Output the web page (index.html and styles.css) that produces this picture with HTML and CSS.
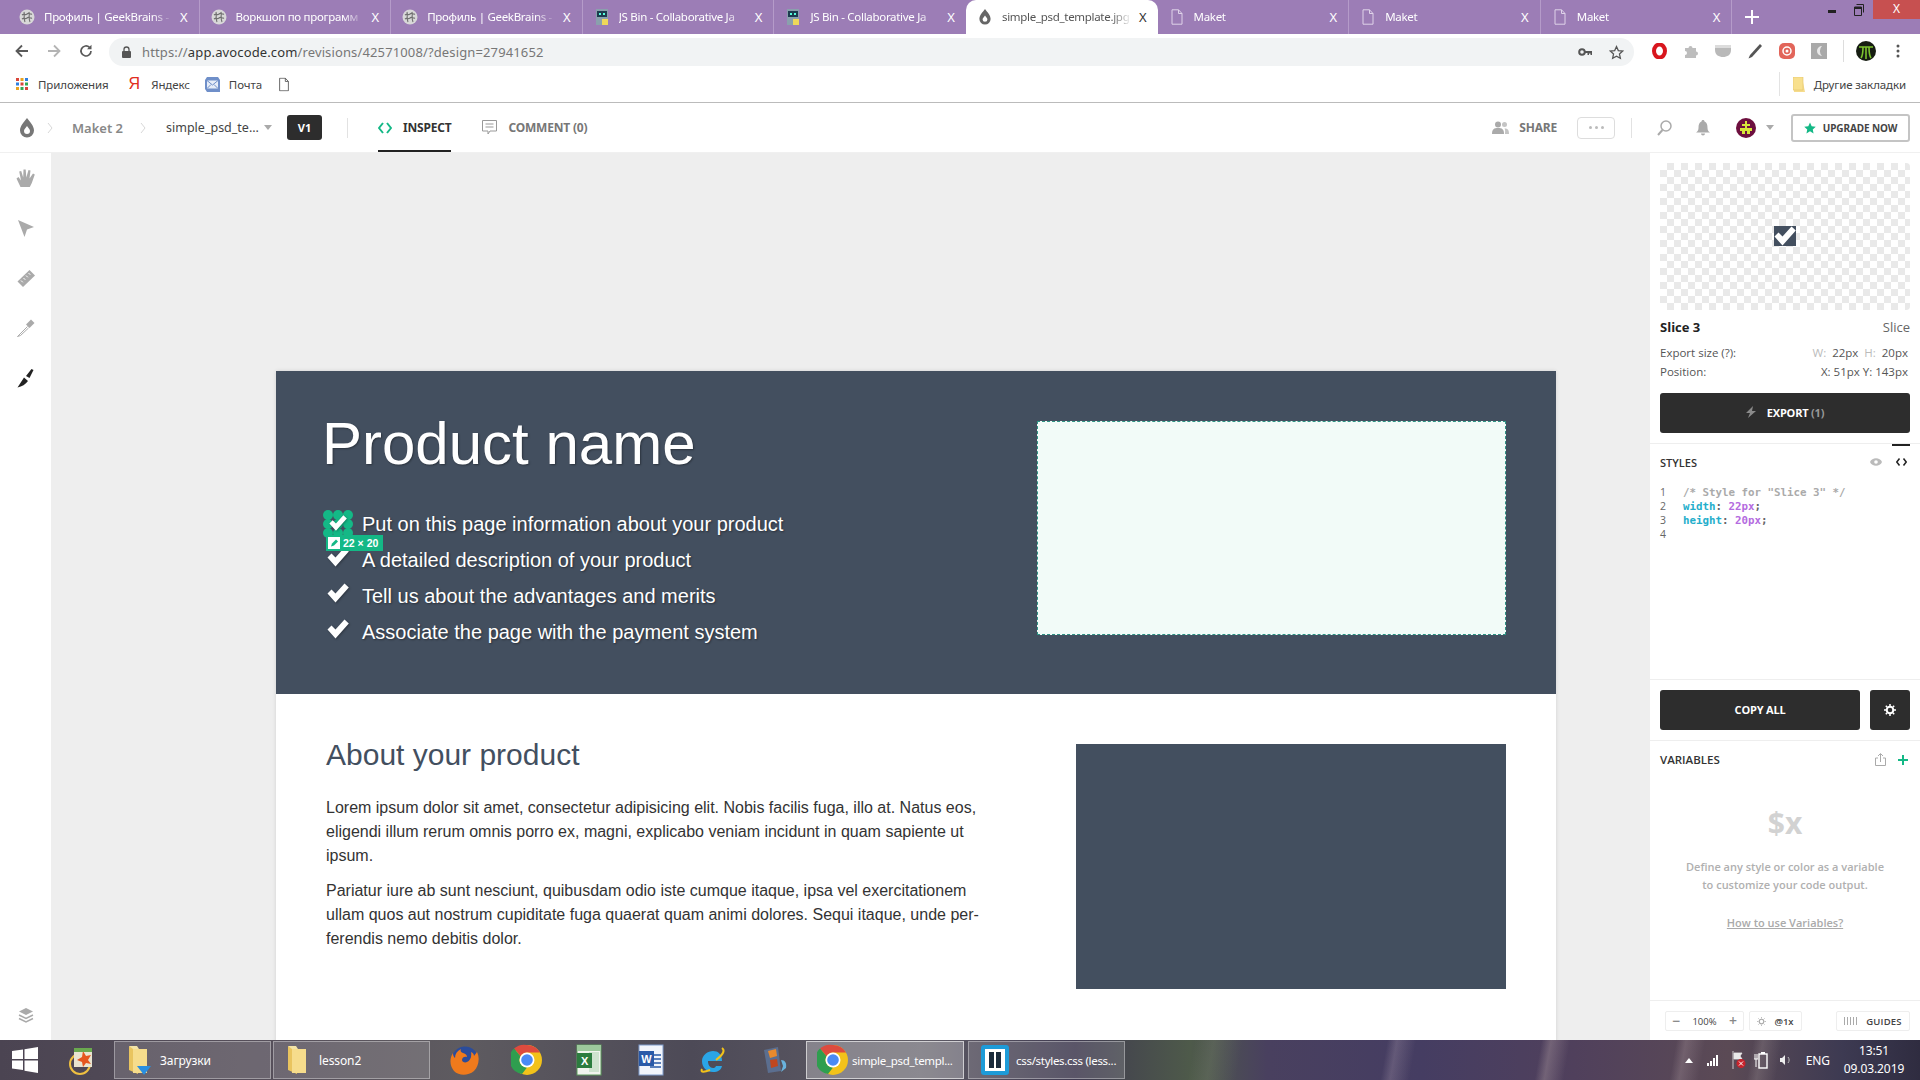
FILE: index.html
```html
<!DOCTYPE html>
<html lang="ru">
<head>
<meta charset="utf-8">
<title>simple_psd_template.jpg</title>
<link rel="stylesheet" href="styles.css">
</head>
<body>
<svg class="defs" width="0" height="0">
  <defs>
    <symbol id="brain" viewBox="0 0 16 16"><circle cx="8" cy="8" r="7.5" fill="#d8d8d8"/><path d="M3 6c2-2 3 1 5-1s3 1 5 0M3 10c2-2 3 1 5-1s3 1 5 0M5 3c1 3-1 6 1 10M10 3c1 3-1 6 1 10" fill="none" stroke="#6f6f6f" stroke-width="1.1"/></symbol>
    <symbol id="jsbin" viewBox="0 0 16 16"><rect x="2" y="0" width="12" height="16" fill="#8aa0ad"/><rect x="3" y="2" width="10" height="6" fill="#1d3b4f"/><rect x="5" y="4" width="2" height="2" fill="#5fd"/><rect x="9" y="4" width="2" height="2" fill="#5fd"/><rect x="8" y="10" width="6" height="6" fill="#efd85a"/></symbol>
    <symbol id="doc" viewBox="0 0 16 16"><path d="M3 .8h6.5L13 4.5v10.7H3zM9.500 .8v3.700H13" fill="none" stroke="currentColor" stroke-width="1"/></symbol>
    <symbol id="drop" viewBox="0 0 16 20"><path fill-rule="evenodd" d="M8 0c3 4 7 8 7 12.500a7 7 0 0 1-14 0C1 8 5 4 8 0zm0 8c-1.500 2-3 3.500-3 5a3 3 0 0 0 6 0c0-1.500-1.500-3-3-5z" fill="currentColor"/></symbol>
    <symbol id="chrome" viewBox="0 0 32 32"><circle cx="16" cy="16" r="15" fill="#f2c21a"/><path d="M16 1a15 15 0 0 1 13 7.500H16a7.500 7.500 0 0 0-6.500 3.750L3 4.500A15 15 0 0 1 16 1z" fill="#dd4b3e"/><path d="M3 4.500l6.500 7.750A7.500 7.500 0 0 0 16 23.500L11 30.100A15 15 0 0 1 3 4.500z" fill="#2f9e4f"/><circle cx="16" cy="16" r="7.500" fill="#fff"/><circle cx="16" cy="16" r="5.800" fill="#4a8af4"/></symbol>
    <symbol id="folder" viewBox="0 0 24 32"><path d="M3 2l9 4v24l-9-4z" fill="#e9c45f"/><path d="M7 5h14v24H7z" fill="#f6dc8c"/><path d="M3 2h8l2 3H7z" fill="#f4e3a6"/></symbol>
    <symbol id="check" viewBox="0 0 22 20"><path d="M.5 10.500L4.500 6.500 8.500 10.500 17.500 .5 21.800 4.500 8.500 19.500z" fill="#fff"/></symbol>
  </defs>
</svg>

<div class="tabstrip">
  <div class="tab"><svg class="fav"><use href="#brain"/></svg><span class="tab-title">Профиль | GeekBrains - </span><span class="tab-x">X</span></div>
  <div class="tab"><svg class="fav"><use href="#brain"/></svg><span class="tab-title">Воркшоп по программ</span><span class="tab-x">X</span></div>
  <div class="tab"><svg class="fav"><use href="#brain"/></svg><span class="tab-title">Профиль | GeekBrains - </span><span class="tab-x">X</span></div>
  <div class="tab"><svg class="fav"><use href="#jsbin"/></svg><span class="tab-title">JS Bin - Collaborative Ja</span><span class="tab-x">X</span></div>
  <div class="tab tab-prev"><svg class="fav"><use href="#jsbin"/></svg><span class="tab-title">JS Bin - Collaborative Ja</span><span class="tab-x">X</span></div>
  <div class="tab tab-active"><svg class="fav fav-drop"><use href="#drop"/></svg><span class="tab-title">simple_psd_template.jpg</span><span class="tab-x">X</span></div>
  <div class="tab"><svg class="fav"><use href="#doc"/></svg><span class="tab-title">Maket</span><span class="tab-x">X</span></div>
  <div class="tab"><svg class="fav"><use href="#doc"/></svg><span class="tab-title">Maket</span><span class="tab-x">X</span></div>
  <div class="tab tab-last"><svg class="fav"><use href="#doc"/></svg><span class="tab-title">Maket</span><span class="tab-x">X</span></div>
  <svg class="newtab" width="14" height="14" viewBox="0 0 14 14"><path d="M7 0v14M0 7h14" stroke="#fff" stroke-width="2"/></svg>
  <div class="winctl">
    <span class="win-min"></span>
    <svg class="win-res" width="10" height="12" viewBox="0 0 10 12"><path d="M2.500 .5h7v8M.5 3h7v8.500h-7z" fill="none" stroke="#222" stroke-width="1"/><path d="M.5 3h7v2h-7z" fill="#222"/></svg>
    <span class="win-close">X</span>
  </div>
</div>

<div class="toolbar">
  <span class="nav-btn"><svg width="14" height="14" viewBox="0 0 14 14"><path d="M13 7H2M7 1.500L1.500 7 7 12.500" fill="none" stroke="#5a5a5a" stroke-width="1.800"/></svg></span>
  <span class="nav-btn"><svg width="14" height="14" viewBox="0 0 14 14"><path d="M1 7h11M7 1.500L12.500 7 7 12.500" fill="none" stroke="#b4b4b4" stroke-width="1.800"/></svg></span>
  <span class="nav-btn"><svg width="14" height="14" viewBox="0 0 14 14"><path d="M12 7a5 5 0 1 1-1.500-3.600" fill="none" stroke="#5a5a5a" stroke-width="1.700"/><path d="M12.500 .8v4.400H8z" fill="#5a5a5a"/></svg></span>
  <div class="omnibox">
    <svg class="lock" width="9" height="12" viewBox="0 0 9 12"><path d="M2 5V3.500a2.500 2.500 0 0 1 5 0V5" fill="none" stroke="#555" stroke-width="1.300"/><rect y="5" width="9" height="7" rx="1" fill="#555"/></svg>
    <span class="url"><span class="url-d">https://</span><span class="url-h">app.avocode.com</span><span class="url-d">/revisions/42571008/?design=27941652</span></span>
    <svg class="key" width="14" height="8" viewBox="0 0 14 8"><circle cx="4" cy="4" r="2.800" fill="none" stroke="#555" stroke-width="2"/><path d="M7 3h7v4h-1.500V5.500H11V7H9.500V5H7z" fill="#555"/></svg>
    <svg class="star" width="15" height="15" viewBox="0 0 24 24"><path d="M12 2.500l2.900 6.500 7.100.7-5.300 4.700 1.500 7-6.200-3.600-6.200 3.600 1.500-7L2 9.700 9.100 9z" fill="none" stroke="#555" stroke-width="2"/></svg>
  </div>
  <div class="ext-row">
    <span class="ext"><svg width="15" height="16" viewBox="0 0 15 16"><ellipse cx="7.500" cy="8" rx="5.500" ry="6.500" fill="none" stroke="#d8161e" stroke-width="4"/></svg></span>
    <span class="ext"><svg width="14" height="14" viewBox="0 0 14 14"><path d="M1 4h3.500a2 2 0 1 1 4 0H12v3.500a2 2 0 1 1 0 4V14H1v-3a2 2 0 1 0 0-4z" fill="#bdbdbd"/></svg></span>
    <span class="ext"><svg width="16" height="12" viewBox="0 0 16 12"><path d="M0 0h16v5c0 5-4 7-8 7s-8-2-8-7z" fill="#b9b9b9"/><path d="M0 0h16v3H0z" fill="#dcdcdc"/></svg></span>
    <span class="ext"><svg width="15" height="16" viewBox="0 0 15 16"><path d="M12 1l2 2L4 14l-3.500 1.500L2 12z" fill="#555"/></svg></span>
    <span class="ext"><svg width="16" height="16" viewBox="0 0 16 16"><rect width="16" height="16" rx="5" fill="#e2655a"/><circle cx="8" cy="8" r="4" fill="none" stroke="#fff" stroke-width="1.500"/><circle cx="8" cy="8" r="1.500" fill="#fff"/></svg></span>
    <span class="ext"><svg width="16" height="16" viewBox="0 0 16 16"><rect width="16" height="16" fill="#a9a9a9"/><path d="M11 3a5 5 0 0 0 0 10 7 7 0 0 1 0-10z" fill="#e9e9e9"/></svg></span>
    <span class="ext-sep"></span>
    <span class="ext ext-avatar"><svg width="20" height="20" viewBox="0 0 20 20"><circle cx="10" cy="10" r="10" fill="#161d12"/><path d="M3 6h14M7 6c0 5 0 8-2 11M13 6c0 5 0 8 2 11M10 6v12" fill="none" stroke="#7cc42e" stroke-width="1.600"/></svg></span>
    <span class="ext"><svg width="4" height="14" viewBox="0 0 4 14"><circle cx="2" cy="2" r="1.500" fill="#555"/><circle cx="2" cy="7" r="1.500" fill="#555"/><circle cx="2" cy="12" r="1.500" fill="#555"/></svg></span>
  </div>
</div>

<div class="bookmarks">
  <svg class="bm-apps" width="12" height="12" viewBox="0 0 12 12"><g><rect width="3" height="3" fill="#d9453a"/><rect x="4.500" width="3" height="3" fill="#e8a21f"/><rect x="9" width="3" height="3" fill="#2f7fe0"/><rect y="4.500" width="3" height="3" fill="#2f7fe0"/><rect x="4.500" y="4.500" width="3" height="3" fill="#d9453a"/><rect x="9" y="4.500" width="3" height="3" fill="#34a853"/><rect y="9" width="3" height="3" fill="#e8a21f"/><rect x="4.500" y="9" width="3" height="3" fill="#34a853"/><rect x="9" y="9" width="3" height="3" fill="#d9453a"/></g></svg>
  <span class="bm-label bm-apps-t">Приложения</span>
  <span class="bm-ya">Я</span>
  <span class="bm-label bm-ya-t">Яндекс</span>
  <svg class="bm-mail" width="15" height="15" viewBox="0 0 15 15"><path d="M2 0h11l2 3v12H2L0 12V3z" fill="#6f8fc9"/><rect x="2" y="3.500" width="11" height="8" fill="#e6edf8"/><path d="M2 3.500l5.500 4.500L13 3.500M2 11.500l4-4M13 11.500l-4-4" fill="none" stroke="#6f8fc9"/></svg>
  <span class="bm-label bm-mail-t">Почта</span>
  <svg class="bm-doc" width="14" height="17" viewBox="0 0 16 16"><use href="#doc"/></svg>
  <span class="bm-spacer"></span>
  <span class="bm-sep"></span>
  <svg class="bm-folder" width="12" height="15" viewBox="0 0 12 15"><path d="M0 0h9l3 15H1z" fill="#f6dc8c"/><path d="M0 0h10v13H0z" fill="#f8e08e" stroke="#e2c569" stroke-width=".6"/></svg>
  <span class="bm-label">Другие закладки</span>
</div>

<header class="apphead">
  <svg class="logo" width="16" height="20"><use href="#drop"/></svg>
  <svg class="crumb-chev c1" width="6" height="12" viewBox="0 0 6 12"><path d="M1 1l4 5-4 5" fill="none" stroke="#d8d8d8"/></svg>
  <span class="crumb">Maket 2</span>
  <svg class="crumb-chev c2" width="6" height="12" viewBox="0 0 6 12"><path d="M1 1l4 5-4 5" fill="none" stroke="#d8d8d8"/></svg>
  <span class="crumb-file">simple_psd_te...</span>
  <span class="caret"></span>
  <span class="version">V1</span>
  <span class="head-sep"></span>
  <div class="mode mode-on">
    <svg width="14" height="12" viewBox="0 0 14 12"><path d="M5 1L1 6l4 5M9 1l4 5-4 5" fill="none" stroke="#14b886" stroke-width="2"/></svg>
    <span>INSPECT</span>
  </div>
  <div class="mode mode-off">
    <svg width="15" height="15" viewBox="0 0 15 15"><path d="M.5.500h14v10.500H8l-2 3v-3H.5z" fill="none" stroke="#999"/><path d="M3.500 4h8M3.500 7h8" stroke="#999"/></svg>
    <span>COMMENT (0)</span>
  </div>
  <span class="head-fill"></span>
  <svg class="share-ic" width="17" height="13" viewBox="0 0 17 13"><circle cx="6" cy="3.500" r="3" fill="#aaa"/><path d="M0 13c0-5 2-6 6-6s6 1 6 6z" fill="#aaa"/><circle cx="12.500" cy="3.500" r="2.500" fill="#c4c4c4"/><path d="M13 13h4c0-4-1-5.500-4.500-5.500 1 1.500.5 3 .5 5.500z" fill="#c4c4c4"/></svg>
  <span class="share-t">SHARE</span>
  <span class="more"><i></i><i></i><i></i></span>
  <span class="head-sep2"></span>
  <svg class="h-search" width="15" height="16" viewBox="0 0 15 16"><circle cx="9" cy="6" r="5" fill="none" stroke="#aaa" stroke-width="1.500"/><path d="M5.500 10L1 15" stroke="#aaa" stroke-width="2"/></svg>
  <svg class="h-bell" width="14" height="16" viewBox="0 0 14 16"><path d="M7 0c1 0 1.500.7 1.500 1.500C11 2.500 11.500 5 11.500 8c0 2 1 3.500 2.500 4.500H0C1.500 11.500 2.500 10 2.500 8c0-3 .5-5.500 3-6.500C5.500.7 6 0 7 0zM5 13.500h4a2 2 0 0 1-4 0z" fill="#aaa"/></svg>
  <svg class="h-avatar" width="20" height="20" viewBox="0 0 20 20"><circle cx="10" cy="10" r="10" fill="#6d0f3e"/><path d="M9 3h2v3h3v2h-3v2h5v3h-2v3h-3v-3H9v3H6v-3H4v-3h5V8H6V6h3z" fill="#d7e63a"/></svg>
  <span class="caret caret-r"></span>
  <button class="upgrade" type="button">
    <svg width="12" height="12" viewBox="0 0 24 24"><path d="M12 1l3.400 7.400 8.100.9-6 5.500 1.600 8L12 18.700l-7.100 4.100 1.600-8-6-5.500 8.100-.9z" fill="#14b886"/></svg>
    UPGRADE NOW
  </button>
</header>

<main class="workspace">
  <nav class="rail">
    <svg class="tool" width="20" height="20" viewBox="0 0 20 20"><path d="M4.500 19L.5 10.500 2.500 9l2.500 3.500L3.200 3.500 5.200 3l2 6.500L7.500 1.500h2.200l.6 8L12.500 2l2 .6L13.500 10.500 17 5.500l1.800 1-3 8.500-2 4z" fill="#aaa"/></svg>
    <svg class="tool" width="20" height="20" viewBox="0 0 20 20"><path d="M2 2l16 7-7 2.500L8.500 19z" fill="#aaa"/></svg>
    <svg class="tool" width="20" height="20" viewBox="0 0 20 20"><path d="M13.500 2L19 7.500 7 19 1.500 13.500z" fill="#aaa"/><path d="M5 12.500l1.800 1.800M7.500 10l1.800 1.800M10 7.500l1.800 1.800M12.500 5l1.800 1.800" stroke="#fff"/></svg>
    <svg class="tool" width="20" height="20" viewBox="0 0 20 20"><path d="M11.500 8.500L4 16l-2.500 2.500L4.500 17.500 12.500 10" fill="#fff" stroke="#aaa"/><path d="M10 6.500l5-5 3.500 3.500-5 5z" fill="#aaa"/></svg>
    <svg class="tool" width="20" height="20" viewBox="0 0 20 20"><path d="M1.500 19.500L8 9.500l4 3.500c-2.500 3.500-6 5.500-10.500 6.500zM10 8l5.500-7 2 1-4 8z" fill="#222"/></svg>
    <span class="rail-fill"></span>
    <svg class="tool tool-last" width="16" height="16" viewBox="0 0 16 16"><path d="M8 1l7 3.500L8 8 1 4.500z" fill="#aaa"/><path d="M1 8l7 3.500L15 8M1 11.500L8 15l7-3.500" fill="none" stroke="#aaa" stroke-width="1.500"/></svg>
  </nav>

  <section class="canvas">
    <article class="sheet">
      <div class="hero">
        <div class="hero-left">
          <h1>Product name</h1>
          <ul class="features">
            <li class="feature">
              <span class="slice-mark"><i></i><i></i><i></i><i></i><i></i><i></i><i></i><i></i><i></i></span>
              <svg class="tick tick-on" width="22" height="20"><use href="#check"/></svg>
              <span>Put on this page information about your product</span>
              <span class="slice-size"><svg width="12" height="12" viewBox="0 0 12 12"><rect width="12" height="12" fill="#fff"/><path d="M3 9.500l1-3 4-4 2 2-4 4z" fill="#14b886"/></svg>22 × 20</span>
            </li>
            <li class="feature"><svg class="tick" width="22" height="20"><use href="#check"/></svg><span>A detailed description of your product</span></li>
            <li class="feature"><svg class="tick" width="22" height="20"><use href="#check"/></svg><span>Tell us about the advantages and merits</span></li>
            <li class="feature"><svg class="tick" width="22" height="20"><use href="#check"/></svg><span>Associate the page with the payment system</span></li>
          </ul>
        </div>
        <div class="hero-media"></div>
      </div>
      <div class="about">
        <div class="about-text">
          <h2>About your product</h2>
          <p>Lorem ipsum dolor sit amet, consectetur adipisicing elit. Nobis facilis fuga, illo at. Natus eos,<br>eligendi illum rerum omnis porro ex, magni, explicabo veniam incidunt in quam sapiente ut<br>ipsum.</p>
          <p>Pariatur iure ab sunt nesciunt, quibusdam odio iste cumque itaque, ipsa vel exercitationem<br>ullam quos aut nostrum cupiditate fuga quaerat quam animi dolores. Sequi itaque, unde per-<br>ferendis nemo debitis dolor.</p>
        </div>
        <div class="about-media"></div>
      </div>
    </article>
  </section>

  <aside class="panel">
    <div class="inspect">
      <div class="preview"><svg class="preview-img" width="22" height="20" viewBox="0 0 22 20"><rect width="22" height="20" fill="#434f5f"/><use href="#check"/></svg></div>
      <div class="meta-title"><strong>Slice 3</strong><span>Slice</span></div>
      <div class="meta-row meta-first"><span>Export size (?):</span><span><b>W:</b>&nbsp; 22px &nbsp;<b>H:</b>&nbsp; 20px</span></div>
      <div class="meta-row"><span>Position:</span><span>X: 51px Y: 143px</span></div>
      <button class="dark-btn export-btn" type="button"><svg width="10" height="12" viewBox="0 0 10 12"><path d="M7 0L0 7h4l-2 5 8-7H6z" fill="#8a8a8a"/></svg><span>EXPORT <em>(1)</em></span></button>
    </div>
    <div class="styles">
      <div class="styles-head">
        <h3>STYLES</h3>
        <svg class="eye" width="12" height="8" viewBox="0 0 12 8"><path d="M0 4c2-5 10-5 12 0-2 5-10 5-12 0z" fill="#bbb"/><circle cx="6" cy="4" r="1.800" fill="#fff"/></svg>
        <span class="code-tab"><svg width="11" height="8" viewBox="0 0 11 8"><path d="M3.500 .5L.8 4l2.700 3.500M7.500 .5L10.200 4 7.500 7.500" fill="none" stroke="#222" stroke-width="1.500"/></svg></span>
      </div>
      <pre class="code"><span class="ln">1</span><span class="cm">/* Style for "Slice 3" */</span>
<span class="ln">2</span><span class="pr">width</span>: <span class="vl">22px</span>;
<span class="ln">3</span><span class="pr">height</span>: <span class="vl">20px</span>;
<span class="ln">4</span></pre>
    </div>
    <div class="copy-row">
      <button class="dark-btn copy-btn" type="button">COPY ALL</button>
      <button class="dark-btn gear-btn" type="button"><svg width="12" height="12" viewBox="0 0 12 12"><circle cx="6" cy="6" r="3.300" fill="none" stroke="#fff" stroke-width="2"/><path d="M6 0v12M0 6h12M1.800 1.800l8.400 8.400M10.200 1.800l-8.400 8.400" stroke="#fff" stroke-width="1.500" stroke-dasharray="2 8"/></svg></button>
    </div>
    <div class="vars">
      <div class="vars-head">
        <h3 class="vars-title">VARIABLES</h3>
        <svg width="11" height="13" viewBox="0 0 11 13"><path d="M3 5H.5v7.500h10V5H8M5.500 9V1M3 3l2.500-2.500L8 3" fill="none" stroke="#aaa"/></svg>
        <svg class="vars-add" width="10" height="10" viewBox="0 0 10 10"><path d="M5 0v10M0 5h10" stroke="#14b886" stroke-width="2"/></svg>
      </div>
      <div class="vars-mark">$x</div>
      <p class="vars-note">Define any style or color as a variable<br>to customize your code output.</p>
      <a class="vars-link" href="#vars">How to use Variables?</a>
    </div>
    <div class="zoombar">
      <div class="zb zb-zoom"><span class="zb-op">−</span><span>100%</span><span class="zb-op">+</span></div>
      <div class="zb zb-scale"><svg width="9" height="9" viewBox="0 0 12 12"><circle cx="6" cy="6" r="3" fill="none" stroke="#aaa" stroke-width="1.500"/><path d="M6 0v12M0 6h12M1.800 1.800l8.400 8.400M10.200 1.800l-8.400 8.400" stroke="#aaa" stroke-dasharray="2 8"/></svg><span>@1x</span></div>
      <div class="zb zb-guides"><svg width="14" height="8" viewBox="0 0 14 8"><path d="M.5 0v8M3.500 0v8M6.500 0v8M9.500 0v8M12.500 0v8" stroke="#aaa"/></svg><span>GUIDES</span></div>
    </div>
  </aside>
</main>

<footer class="taskbar">
  <span class="tb-start"><svg width="26" height="26" viewBox="0 0 26 26"><path d="M0 4l11-1.500V12H0zM12.500 2.300L26 0v12H12.500zM0 13.500h11V23L0 21.500zM12.500 13.500H26V26l-13.500-2.300z" fill="#fff"/></svg></span>
  <span class="tb-slot tb-s2"><svg width="28" height="30" viewBox="0 0 28 30"><circle cx="12" cy="19" r="10" fill="none" stroke="#f0c040" stroke-width="2"/><rect x="6" y="3" width="18" height="19" fill="#e9e4d0"/><path d="M15 6l3 5 5-1-3 5 3 4-5-1-3 4-1-5-5-2 5-3z" fill="#e5561f"/><rect x="6" y="3" width="18" height="4" fill="#6aa84f"/></svg></span>
  <div class="task">
    <svg width="24" height="32"><use href="#folder"/></svg>
    <span class="task-badge"></span>
    <span>Загрузки</span>
  </div>
  <div class="task">
    <svg width="24" height="32"><use href="#folder"/></svg>
    <span>lesson2</span>
  </div>
  <span class="tb-icon tb-first"><svg width="30" height="32" viewBox="0 0 30 32"><circle cx="15" cy="16" r="13.500" fill="#2b4c9b"/><path d="M27 8c3 6 2 14-3 19-6 5-15 5-20 0C0 22-1 15 3 9c0 3 1 4 2 5 0-4 2-7 6-9-1 2 0 3 2 4 3 1 4 2 4 4-2-1-5 0-5 3 0 2 3 3 5 2 3-1 5-5 4-10 2 1 3 2 3 4z" fill="#ef7a1c"/></svg></span>
  <span class="tb-icon"><svg width="32" height="32"><use href="#chrome"/></svg></span>
  <span class="tb-icon"><svg width="30" height="32" viewBox="0 0 30 32"><rect x="3" y="1" width="24" height="30" fill="#f1f4ee" stroke="#5c9b5c"/><path d="M3 1h24v6H3z" fill="#9cc89c"/><path d="M15 8h10v20H15" fill="#cfe3cf"/><rect x="3" y="9" width="15" height="15" fill="#2c7c3f"/><text x="10.500" y="21" class="tb-letter">X</text></svg></span>
  <span class="tb-icon"><svg width="30" height="32" viewBox="0 0 30 32"><rect x="3" y="1" width="24" height="30" fill="#f2f5fb" stroke="#7f9bcb"/><path d="M14 11h11M14 15h11M14 19h11M14 23h11" stroke="#2a5aa8" stroke-width="1.500"/><rect x="3" y="7" width="15" height="15" fill="#2a5aa8"/><text x="10.500" y="19" class="tb-letter">W</text></svg></span>
  <span class="tb-icon"><svg width="30" height="32" viewBox="0 0 30 32"><path d="M7 17h17c0-7-4-10-9-10S4 11 4 17s4 11 11 11c5 0 8-2 9-6h-6c-1 2-2 2-3 2-3 0-5-3-5-7z" fill="#2aa5e6"/><path d="M24 4c3 2 2 6-6 12M4 25c-2 4 3 3 8 1" fill="none" stroke="#f2c21a" stroke-width="2"/></svg></span>
  <span class="tb-icon tb-end"><svg width="30" height="32" viewBox="0 0 30 32"><path d="M5 6l14-3 3 24-13 2z" fill="#5b6e8f"/><path d="M9 7l8-2 1 7-7 2z" fill="#e88a2d"/><path d="M11 16l7-1 1 7-7 2z" fill="#c0471f"/><path d="M22 16c4 0 6 3 5 8l-5 4 2-6z" fill="#69b2dd"/></svg></span>
  <div class="task task-on">
    <svg width="32" height="32"><use href="#chrome"/></svg>
    <span>simple_psd_templ...</span>
  </div>
  <div class="task task-css">
    <svg width="30" height="32" viewBox="0 0 30 32"><rect x="1" y="1" width="28" height="30" rx="3" fill="#1d9bd8"/><rect x="5" y="5" width="20" height="22" fill="#fff"/><rect x="9" y="8" width="5" height="16" fill="#1a2b3c"/><rect x="16" y="8" width="5" height="16" fill="#1a2b3c"/></svg>
    <span>css/styles.css (less...</span>
  </div>
  <span class="tb-fill"></span>
  <div class="tray">
    <span class="tray-up"></span>
    <svg class="tray-sig" width="14" height="12" viewBox="0 0 14 12"><path d="M1 9h2v3H1zM4 7h2v5H4zM7 4h2v8H7zM10 1h2v11h-2z" fill="#fff"/></svg>
    <svg class="tray-flag" width="14" height="18" viewBox="0 0 14 18"><path d="M1 0v18M2 2h8l-2 3 2 3H2z" fill="#e8e8e8" stroke="#e8e8e8" stroke-width=".8"/><circle cx="9" cy="12.500" r="4.500" fill="#c8232c"/><path d="M7 10.500l4 4M11 10.500l-4 4" stroke="#fff"/></svg>
    <svg class="tray-bat" width="14" height="18" viewBox="0 0 14 18"><rect x="5" y="3" width="8" height="14" fill="none" stroke="#fff" stroke-width="1.400"/><rect x="7" y="1" width="4" height="2" fill="#fff"/><path d="M1 3v5M3 3v5M0 8h4M2 8v8" stroke="#fff"/></svg>
    <svg class="tray-snd" width="12" height="14" viewBox="0 0 12 14"><path d="M0 5h2l3-3v10L2 9H0z" fill="#eee"/><path d="M8 4c1.500 2 1.500 4 0 6" fill="none" stroke="#bbb"/></svg>
    <span class="tray-lang">ENG</span>
    <span class="clock"><span>13:51</span><span>09.03.2019</span></span>
  </div>
</footer>
</body>
</html>
```
FILE: styles.css
```css
* { box-sizing: border-box; }
html, body { margin: 0; padding: 0; width: 1920px; height: 1080px; overflow: hidden; }
body { font-family: "Noto Sans", "Open Sans", sans-serif; background: #fff; color: #333; display: flex; flex-direction: column; }
.defs { display: block; height: 0; }
h1, h2, h3, p, ul { margin: 0; padding: 0; }
button { font-family: inherit; border: 0; padding: 0; }

/* browser tabs */
.tabstrip { height: 34px; flex: none; background: #9c7db6; display: flex; align-items: stretch; padding-left: 8px; position: relative; }
.tab { width: 191.6px; flex: none; display: flex; align-items: center; padding: 0 8px 1px 11px; color: #fff; font-size: 11.500px; letter-spacing: -.3px; position: relative; border-right: 1px solid #b59bc9; }
.tab-prev { border-right: 0; }
.tab-last { border-right: 1px solid #b59bc9; }
.tab-active { background: #fff; color: #555; border-radius: 10px 10px 0 0; border-right: 0; }
.fav { width: 16px; height: 16px; flex: none; color: #dfd3e9; }
.fav-drop { color: #666; }
.tab-title { flex: 1; min-width: 0; margin-left: 9px; white-space: nowrap; overflow: hidden; -webkit-mask-image: linear-gradient(90deg, #000 84%, transparent); mask-image: linear-gradient(90deg, #000 84%, transparent); }
.tab-x { width: 14px; margin-left: 4px; font-size: 13px; text-align: center; flex: none; }
.tab-active .tab-x { color: #333; }
.newtab { align-self: center; margin-left: 13px; }
.winctl { margin-left: auto; display: flex; align-items: flex-start; }
.win-min { width: 8px; height: 3px; background: #222; margin: 10px 0 0 0; }
.win-res { margin: 4px 0 0 18px; }
.win-close { width: 47px; height: 19px; background: #c75050; color: #fff; font-size: 12px; text-align: center; line-height: 18px; margin-left: 9px; }

/* toolbar */
.toolbar { height: 34px; flex: none; background: #fff; display: flex; align-items: center; padding-left: 6px; }
.nav-btn { width: 32px; display: flex; justify-content: center; }
.omnibox { width: 1525px; margin-left: 7px; height: 28px; margin-top: 2px; background: #f1f3f4; border-radius: 14px; display: flex; align-items: center; padding: 0 10px 0 13px; }
.lock { flex: none; }
.url { margin-left: 11px; font-size: 13px; letter-spacing: .13px; color: #777; flex: 1; white-space: nowrap; }
.url-h { color: #333; }
.url-d { color: #777; }
.key { flex: none; }
.star { flex: none; margin-left: 17px; }
.ext-row { display: flex; align-items: center; margin-left: 9px; }
.ext { width: 32px; display: flex; justify-content: center; }
.ext-sep { width: 1px; height: 22px; background: #ddd; margin-left: 8px; }
.ext-avatar { margin-left: 6px; width: 32px; }

/* bookmarks */
.bookmarks { height: 34px; flex: none; background: #fff; display: flex; align-items: center; padding: 0 14px 2px 16px; font-size: 11.500px; color: #444; }
.bm-label { white-space: nowrap; letter-spacing: -.1px; }
.bm-apps-t { margin-left: 10px; }
.bm-ya { margin-left: 20px; color: #e02d20; font-size: 16px; font-family: "Liberation Sans", sans-serif; }
.bm-ya-t { margin-left: 11px; }
.bm-mail { margin-left: 15px; }
.bm-mail-t { margin-left: 9px; }
.bm-doc { margin-left: 15px; color: #555; }
.bm-spacer { flex: 1; }
.bm-sep { width: 1px; height: 24px; background: #e3e3e3; margin-right: 13px; }
.bm-folder { margin-right: 9px; }

/* app header */
.apphead { height: 51px; flex: none; background: #fff; border-top: 1px solid #bbb; border-bottom: 1px solid #f0f0f0; display: flex; align-items: center; font-size: 12px; color: #666; }
.logo { color: #777; margin-left: 19px; flex: none; }
.crumb-chev { flex: none; }
.c1 { margin-left: 12px; }
.crumb { margin-left: 19px; font-size: 13px; color: #888; font-weight: 600; white-space: nowrap; }
.c2 { margin-left: 17px; }
.crumb-file { margin-left: 20px; font-size: 12.500px; color: #444; white-space: nowrap; }
.caret { width: 0; height: 0; border: 4px solid transparent; border-top: 5px solid #aaa; border-bottom: 0; margin-left: 5px; flex: none; }
.version { width: 35px; height: 25px; margin-left: 15px; background: #2d2d2d; color: #fff; border-radius: 3px; font-size: 11px; font-weight: 700; text-align: center; line-height: 25px; }
.head-sep { width: 1px; height: 20px; background: #e2e2e2; margin-left: 25px; }
.mode { display: flex; align-items: center; gap: 11px; font-weight: 700; font-size: 12px; letter-spacing: -.2px; height: 49px; white-space: nowrap; }
.mode-on { margin-left: 30px; color: #333; border-bottom: 2px solid #222; padding: 2px 0 0 0; }
.mode-off { margin-left: 31px; color: #777; gap: 11px; }
.head-fill { flex: 1; }
.share-t { font-weight: 700; color: #777; margin-left: 10px; letter-spacing: -.2px; }
.more { width: 38px; height: 22px; border: 1px solid #ddd; border-radius: 4px; margin-left: 20px; display: flex; align-items: center; justify-content: center; gap: 3px; }
.more i { width: 3px; height: 3px; border-radius: 50%; background: #bbb; }
.head-sep2 { width: 1px; height: 20px; background: #e2e2e2; margin-left: 16px; }
.h-search { margin-left: 25px; }
.h-bell { margin-left: 24px; }
.h-avatar { margin-left: 26px; }
.caret-r { margin-left: 10px; }
.upgrade { width: 119px; height: 28px; margin: 0 10px 0 17px; border: 2px solid #c4c4c4; border-radius: 3px; background: #fff; color: #444; font-size: 10px; font-weight: 700; display: flex; align-items: center; justify-content: center; gap: 7px; white-space: nowrap; letter-spacing: -.1px; }

/* workspace */
.workspace { flex: 1; min-height: 0; display: flex; }
.rail { width: 51px; flex: none; background: #fff; display: flex; flex-direction: column; align-items: center; padding-top: 15px; gap: 30px; }
.tool { flex: none; }
.rail-fill { flex: 1; }
.tool-last { margin: -30px 0 17px; }
.canvas { width: 1599px; flex: none; background: #eee; padding: 218px 0 0 225px; overflow: hidden; }
.sheet { width: 1280px; height: 680px; background: #fff; box-shadow: 0 0 4px rgba(0, 0, 0, .12); font-family: "Liberation Sans", Arial, sans-serif; }
.hero { height: 323px; background: #434f5f; display: flex; justify-content: space-between; padding: 50px 50px 0 0; color: #fff; }
.hero-left { margin-top: -7px; padding-left: 46px; }
h1 { font-size: 60px; line-height: 60px; font-weight: 400; text-shadow: 1px 1px 2px rgba(0, 0, 0, .35); }
.features { list-style: none; margin-top: 32px; padding-left: 5px; }
.feature { height: 36px; display: flex; align-items: center; gap: 13px; font-size: 20px; white-space: nowrap; text-shadow: 1px 1px 2px rgba(0, 0, 0, .4); position: relative; }
.tick { flex: none; margin-top: -6px; filter: drop-shadow(1px 1px 1px rgba(0, 0, 0, .3)); }
.slice-mark { position: absolute; left: -4px; top: 4px; width: 30px; height: 27px; display: grid; grid-template-columns: repeat(3, 10px); grid-template-rows: repeat(3, 9px); }
.slice-mark i { background: #14b886; border-radius: 50%; width: 10px; height: 10px; }
.tick-on { position: relative; margin-top: -3px; transform: scale(.82); }
.slice-size { position: absolute; left: -1px; top: 29px; width: 57px; height: 16px; background: #14b886; color: #fff; font-size: 10.500px; font-weight: 700; display: flex; align-items: center; gap: 3px; padding-left: 2px; text-shadow: none; z-index: 2; }
.hero-media { width: 469px; height: 214px; background: #f2fbf8; border: 1px dashed #2f9384; }
.about { display: flex; justify-content: space-between; padding: 0 50px 0 50px; }
.about-text { padding-top: 41px; }
h2 { font-size: 30px; line-height: 40px; font-weight: 400; color: #434f5f; }
.about-text p { font-size: 16px; line-height: 24px; color: #333; white-space: nowrap; }
.about-text h2 + p { margin-top: 21px; }
.about-text p + p { margin-top: 11px; }
.about-media { width: 430px; height: 245px; margin-top: 50px; background: #434f5f; }

/* right panel */
.panel { width: 270px; flex: none; background: #fff; display: flex; flex-direction: column; font-family: "Open Sans", "Noto Sans", sans-serif; }
.inspect { height: 291px; flex: none; padding: 10px 10px 0; border-bottom: 1px solid #eee; }
.preview { height: 147px; border-radius: 4px; background-color: #fff; background-image: repeating-conic-gradient(#e9e9e9 0 25%, #fff 0 50%); background-size: 14px 14px; display: flex; align-items: center; justify-content: center; }
.preview-img { display: block; margin-top: -1px; }
.meta-title { display: flex; justify-content: space-between; align-items: center; height: 18px; margin-top: 8px; font-size: 13px; }
.meta-title strong { color: #222; }
.meta-title span { color: #666; }
.meta-row { display: flex; justify-content: space-between; height: 19px; line-height: 19px; font-size: 11.500px; color: #555; padding-right: 2px; }
.meta-first { margin-top: 7px; }
.meta-row b { font-weight: 400; color: #bbb; }
.dark-btn { background: #2d2d2d; color: #fff; border-radius: 3px; display: flex; align-items: center; justify-content: center; font-weight: 700; font-size: 11px; letter-spacing: -.2px; padding-bottom: 1px; }
.export-btn { width: 250px; height: 40px; margin-top: 12px; gap: 11px; padding-bottom: 2px; }
.export-btn em { font-style: normal; color: #999; }
.styles { height: 236px; flex: none; padding: 0 10px; border-bottom: 1px solid #eee; }
.styles-head { display: flex; align-items: center; height: 37px; }
h3 { font-size: 11px; font-weight: 600; color: #333; margin-right: auto; }
.vars-title { font-size: 11.500px; }
.eye { margin-right: 10px; margin-top: -2px; }
.code-tab { width: 18px; height: 38px; display: flex; align-items: center; justify-content: center; border-top: 2px solid #222; padding-bottom: 3px; }
.code { margin: 5px 0 0; font-family: "DejaVu Sans Mono", "Liberation Mono", monospace; font-size: 10.800px; line-height: 14px; font-weight: 700; color: #666; }
.ln { display: inline-block; width: 23px; line-height: 12px; font-family: "Open Sans", sans-serif; font-weight: 400; font-size: 10.500px; color: #666; }
.cm { color: #aaa; }
.pr { color: #24aecb; }
.vl { color: #b46be0; }
.copy-row { height: 61px; flex: none; padding: 10px; display: flex; gap: 10px; border-bottom: 1px solid #eee; }
.copy-btn { width: 200px; height: 40px; }
.gear-btn { width: 40px; height: 40px; padding: 0; }
.vars { height: 260px; flex: none; padding: 0 10px; border-bottom: 1px solid #eee; text-align: center; }
.vars-head { display: flex; align-items: center; height: 37px; gap: 12px; text-align: left; }
.vars-add { margin-right: 2px; }
.vars-mark { font-size: 30px; font-weight: 700; color: #d2d2d2; line-height: 40px; margin-top: 25px; }
.vars-note { font-size: 11px; font-weight: 600; color: #b0b0b0; line-height: 18px; margin-top: 15px; }
.vars-link { display: block; margin-top: 21px; font-size: 11px; font-weight: 600; color: #aaa; text-decoration: underline; }
.zoombar { flex: 1; display: flex; align-items: flex-start; padding: 10px 10px 0 15px; gap: 5px; font-size: 9.500px; color: #444; }
.zb { height: 20px; border: 1px solid #eee; border-radius: 2px; display: flex; align-items: center; justify-content: center; font-weight: 600; white-space: nowrap; }
.zb-zoom { width: 79px; justify-content: space-between; padding: 0 6px; font-weight: 400; }
.zb-op { color: #888; font-size: 14px; line-height: 1; font-weight: 600; }
.zb-scale { width: 53px; gap: 8px; }
.zb-guides { width: 74px; gap: 8px; margin-left: auto; letter-spacing: .2px; }

/* taskbar */
.taskbar { height: 40px; flex: none; display: flex; align-items: center; color: #fff; font-size: 12px; letter-spacing: -.1px;
  background:
    linear-gradient(100deg, transparent 62%, rgba(150, 170, 120, .18) 63%, transparent 64.5%, transparent 72%, rgba(220, 200, 210, .2) 72.5%, transparent 73.5%, transparent 80%, rgba(230, 210, 200, .24) 80.5%, transparent 81.5%, transparent 87%, rgba(230, 210, 210, .18) 87.5%, transparent 88.5%, transparent 91%, rgba(230, 220, 210, .15) 91.5%, transparent 92.5%),
    linear-gradient(90deg, #4b4452 0, #57505b 15%, #5e5b60 24%, #4d4a57 36%, #5f5c66 48%, #3f3a50 56%, #4e5a4a 62%, #49405f 66%, #453d62 74%, #50405c 82%, #5b4a55 90%, #3d3a52 96%, #2f2c40 100%); }
.tb-start { width: 50px; display: flex; justify-content: center; flex: none; }
.tb-s2 { width: 64px; display: flex; justify-content: center; flex: none; }
.task { height: 38px; width: 157px; flex: none; display: flex; align-items: center; gap: 10px; padding-left: 11px; background: rgba(255, 255, 255, .14); border: 1px solid rgba(255, 255, 255, .35); position: relative; white-space: nowrap; }
.task + .task { margin-left: 2px; }
.task-badge { position: absolute; left: 22px; bottom: 3px; border: 7px solid transparent; border-top: 9px solid #2a8ee0; border-bottom: 0; }
.tb-icon { width: 62px; flex: none; display: flex; justify-content: center; }
.tb-first { margin-left: 4px; }
.tb-end { width: 60px; }
.tb-icon + .task { margin-left: 2px; }
.tb-letter { font-family: "Liberation Sans", sans-serif; font-size: 11px; font-weight: 700; fill: #fff; text-anchor: middle; }
.task-on { width: 158px; padding-left: 10px; gap: 3px; background: rgba(255, 255, 255, .28); border-color: rgba(255, 255, 255, .6); }
.task-css { margin-left: 4px !important; padding-left: 11px; gap: 6px; }
.task-on, .task-css { letter-spacing: -.3px; font-size: 11.500px; }
.tb-fill { flex: 1; }
.tray { display: flex; align-items: center; }
.tray-up { border: 4px solid transparent; border-bottom: 5px solid #fff; border-top: 0; }
.tray-sig { margin-left: 13px; }
.tray-flag { margin-left: 12px; }
.tray-bat { margin-left: 8px; }
.tray-snd { margin-left: 12px; }
.tray-lang { margin-left: 14px; }
.clock { width: 64px; margin: 0 14px 0 12px; display: flex; flex-direction: column; align-items: center; line-height: 18px; }
```
